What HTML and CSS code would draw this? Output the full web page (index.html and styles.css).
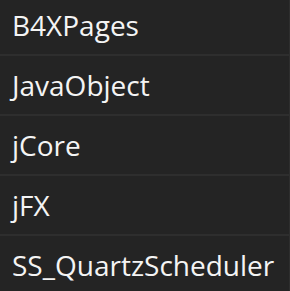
FILE: index.html
```html
<!DOCTYPE html>
<html>
<head>
<meta charset="utf-8">
<link rel="stylesheet" href="styles.css">
</head>
<body>
<div class="list">
  <div class="item">B4XPages</div>
  <div class="item">JavaObject</div>
  <div class="item">jCore</div>
  <div class="item">jFX</div>
  <div class="item">SS_QuartzScheduler</div>
</div>
</body>
</html>
```
FILE: styles.css
```css
html, body {
  margin: 0;
  padding: 0;
  background: #242424;
  height: 100%;
  overflow: hidden;
}
.list {
  margin-top: -4px;
  border-right: 1px solid #2e2e2e;
  height: calc(100% + 4px);
  box-sizing: border-box;
}
.item {
  height: 58px;
  border-bottom: 2px solid #2e2e2e;
  display: flex;
  align-items: center;
  padding-left: 12px;
  color: #f4f4f4;
  font-family: "Open Sans", sans-serif;
  font-size: 28px;
  white-space: nowrap;
}
```
